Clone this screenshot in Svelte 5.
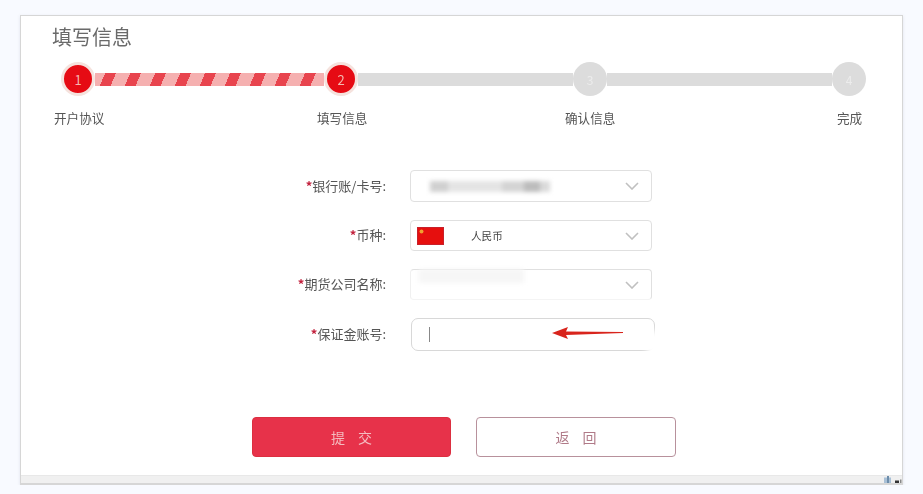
<script>
  const steps = [
    { n: 1, active: true },
    { n: 2, active: true },
    { n: 3, active: false },
    { n: 4, active: false }
  ];
  const stepLabels = ['开户协议', '填写信息', '确认信息', '完成'];
</script>

<div class="window">
  <h1>填写信息</h1>

  <div class="track">
    {#each steps as s, i}
      <div class="node" class:active={s.active}><span>{s.n}</span></div>
      {#if i < 3}
        <div class="seg seg{i + 1}"></div>
      {/if}
    {/each}
  </div>

  <div class="step-labels">
    {#each stepLabels as label, i}
      <span class="sl sl{i + 1}">{label}</span>
    {/each}
  </div>

  <div class="form">
    <div class="row first">
      <div class="label"><em>*</em>银行账/卡号:</div>
      <div class="control">
        <div class="smudge gray"></div>
        <svg class="chev" viewBox="0 0 14 8"><path d="M1 1l6 6 6-6" /></svg>
      </div>
    </div>
    <div class="row">
      <div class="label"><em>*</em>币种:</div>
      <div class="control">
        <svg class="flag" viewBox="0 0 27 18">
          <rect width="27" height="18" fill="#e60f0e" />
          <rect x="0.5" y="0.5" width="26" height="17" fill="none" stroke="#c8202a" />
          <circle cx="4.5" cy="4.5" r="2" fill="#f0a030" />
        </svg>
        <span class="cur">人民币</span>
        <svg class="chev" viewBox="0 0 14 8"><path d="M1 1l6 6 6-6" /></svg>
      </div>
    </div>
    <div class="row">
      <div class="label"><em>*</em>期货公司名称:</div>
      <div class="control faded">
        <div class="smudge light"></div>
        <svg class="chev" viewBox="0 0 14 8"><path d="M1 1l6 6 6-6" /></svg>
      </div>
    </div>
    <div class="row last">
      <div class="label"><em>*</em>保证金账号:</div>
      <div class="control input">
        <i class="caret"></i>
        <svg class="arrow" viewBox="0 0 72 14"><path d="M0 7 L16 1 L14 5.5 L71 6 L71 7 L14 9 L16 13 Z" /></svg>
        <div class="erase"></div>
      </div>
    </div>
  </div>

  <div class="actions">
    <button class="btn primary">提 交</button>
    <button class="btn ghost">返 回</button>
  </div>

  <div class="statusbar">
    <svg class="tray" viewBox="0 0 18 7">
      <rect x="0" y="1.5" width="7" height="5.5" fill="#a9c0d6" />
      <rect x="3" y="0" width="2" height="7" fill="#6d8dab" />
      <rect x="11" y="4.5" width="4" height="2.5" fill="#333" />
      <rect x="16" y="3.5" width="1.5" height="3.5" fill="#888" />
    </svg>
  </div>
</div>

<style>
  :global(body) {
    margin: 0;
    background: #f8faff;
    font-family: "Noto Sans CJK SC", "Noto Sans", sans-serif;
  }

  .window {
    box-sizing: border-box;
    width: 883px;
    height: 470px;
    margin: 15px 0 0 20px;
    background: #fff;
    border: 1px solid #d6d6d6;
    border-bottom-width: 2px;
    box-shadow: 0 1px 3px rgba(120, 130, 150, 0.18);
    display: flex;
    flex-direction: column;
    color: #555;
    overflow: hidden;
    filter: blur(0.35px);
  }

  h1 {
    margin: 6px 0 0 31px;
    font-size: 20px;
    line-height: 30px;
    font-weight: 400;
    color: #6a6a6a;
  }

  .track {
    display: flex;
    align-items: center;
    margin: 10px 0 0 40px;
    height: 34px;
  }

  .node {
    position: relative;
    z-index: 1;
    flex: none;
    width: 34px;
    height: 34px;
    border-radius: 50%;
    background: #dcdcdc;
    display: flex;
    align-items: center;
    justify-content: center;
    color: #ececec;
    font-size: 12px;
  }

  .node.active {
    box-sizing: border-box;
    background: #e60b14;
    color: #f4b8ae;
    border: 3px solid #f5e2dd;
    font-size: 13px;
  }

  .seg {
    flex: none;
    height: 13px;
    background: #dcdcdc;
  }

  .seg1 {
    width: 229px;
    background: repeating-linear-gradient(
      -67deg,
      #f5b0b0 0 12.5px,
      #e8444e 12.5px 22.5px,
      #f5b0b0 22.5px 23px
    );
  }

  .seg2 { width: 215px; }
  .seg3 { width: 225px; }

  .step-labels {
    display: flex;
    margin: 12px 0 0 33px;
    height: 20px;
    font-size: 12.6px;
    line-height: 20px;
    color: #555;
  }

  .sl { flex: none; white-space: nowrap; }
  .sl1 { width: 263px; }
  .sl2 { width: 248px; }
  .sl3 { width: 272px; }

  .form {
    display: flex;
    flex-direction: column;
    gap: 18px;
    margin-top: 42px;
  }

  .row {
    display: flex;
    align-items: center;
    gap: 24px;
    height: 31px;
  }

  .row.first { height: 32px; }
  .row.last { height: 33px; }

  .label {
    width: 365px;
    text-align: right;
    font-size: 13px;
    color: #555;
    padding-bottom: 2px;
  }

  .label em {
    font-style: normal;
    color: #c2203c;
    font-weight: 700;
  }

  .control {
    position: relative;
    box-sizing: border-box;
    flex: none;
    width: 242px;
    height: 100%;
    border: 1px solid #e0e0e0;
    border-radius: 4px;
    display: flex;
    align-items: center;
    background: #fff;
  }

  .control.faded { border-bottom-color: #f4f4f4; border-left-color: #f0f0f0; }

  .control.input {
    width: 244px;
    margin-left: 1px;
    border-radius: 7px;
    border-color: #d8d8d8;
  }

  .chev {
    position: absolute;
    right: 12px;
    top: 50%;
    width: 14px;
    height: 8px;
    margin-top: -4px;
    fill: none;
    stroke: #c0c0c0;
    stroke-width: 1.6;
  }

  .smudge {
    position: absolute;
    filter: blur(2px);
  }

  .smudge.gray {
    left: 19px;
    top: 10px;
    width: 120px;
    height: 11px;
    background: linear-gradient(
      90deg,
      #d0d0d0 0 15%,
      #e4e4e4 15% 60%,
      #d4d4d4 60% 78%,
      #bcbcbc 78% 92%,
      #dadada 92%
    );
  }

  .smudge.light {
    left: 8px;
    top: -1px;
    width: 105px;
    height: 14px;
    background: #f6f6f6;
  }

  .flag {
    flex: none;
    width: 27px;
    height: 18px;
    margin-left: 6px;
  }

  .cur {
    margin-left: 27px;
    font-size: 10.6px;
    color: #444;
  }

  .caret {
    width: 1px;
    height: 15px;
    margin-left: 17px;
    background: #888;
  }

  .arrow {
    position: absolute;
    left: 140px;
    top: 7px;
    width: 72px;
    height: 14px;
    fill: #d8241c;
  }

  .erase {
    position: absolute;
    right: -9px;
    top: 12px;
    width: 16px;
    height: 30px;
    background: #fff;
    filter: blur(3px);
  }

  .actions {
    display: flex;
    gap: 25px;
    margin: 66px 0 0 231px;
  }

  .btn {
    box-sizing: border-box;
    width: 200px;
    height: 40px;
    border-radius: 4px;
    font-family: inherit;
    font-size: 14px;
    word-spacing: 10px;
    padding: 0;
  }

  .primary {
    width: 199px;
    background: #e7324a;
    border: 1px solid #dc2f40;
    color: #f4bcc0;
  }

  .ghost {
    background: #fff;
    border: 1px solid #b8919c;
    color: #b07a88;
  }

  .statusbar {
    margin-top: auto;
    height: 7px;
    background: #f0f0f0;
    border-top: 1px solid #e8e8e8;
    display: flex;
    justify-content: flex-end;
  }

  .tray {
    width: 18px;
    height: 7px;
  }
</style>
